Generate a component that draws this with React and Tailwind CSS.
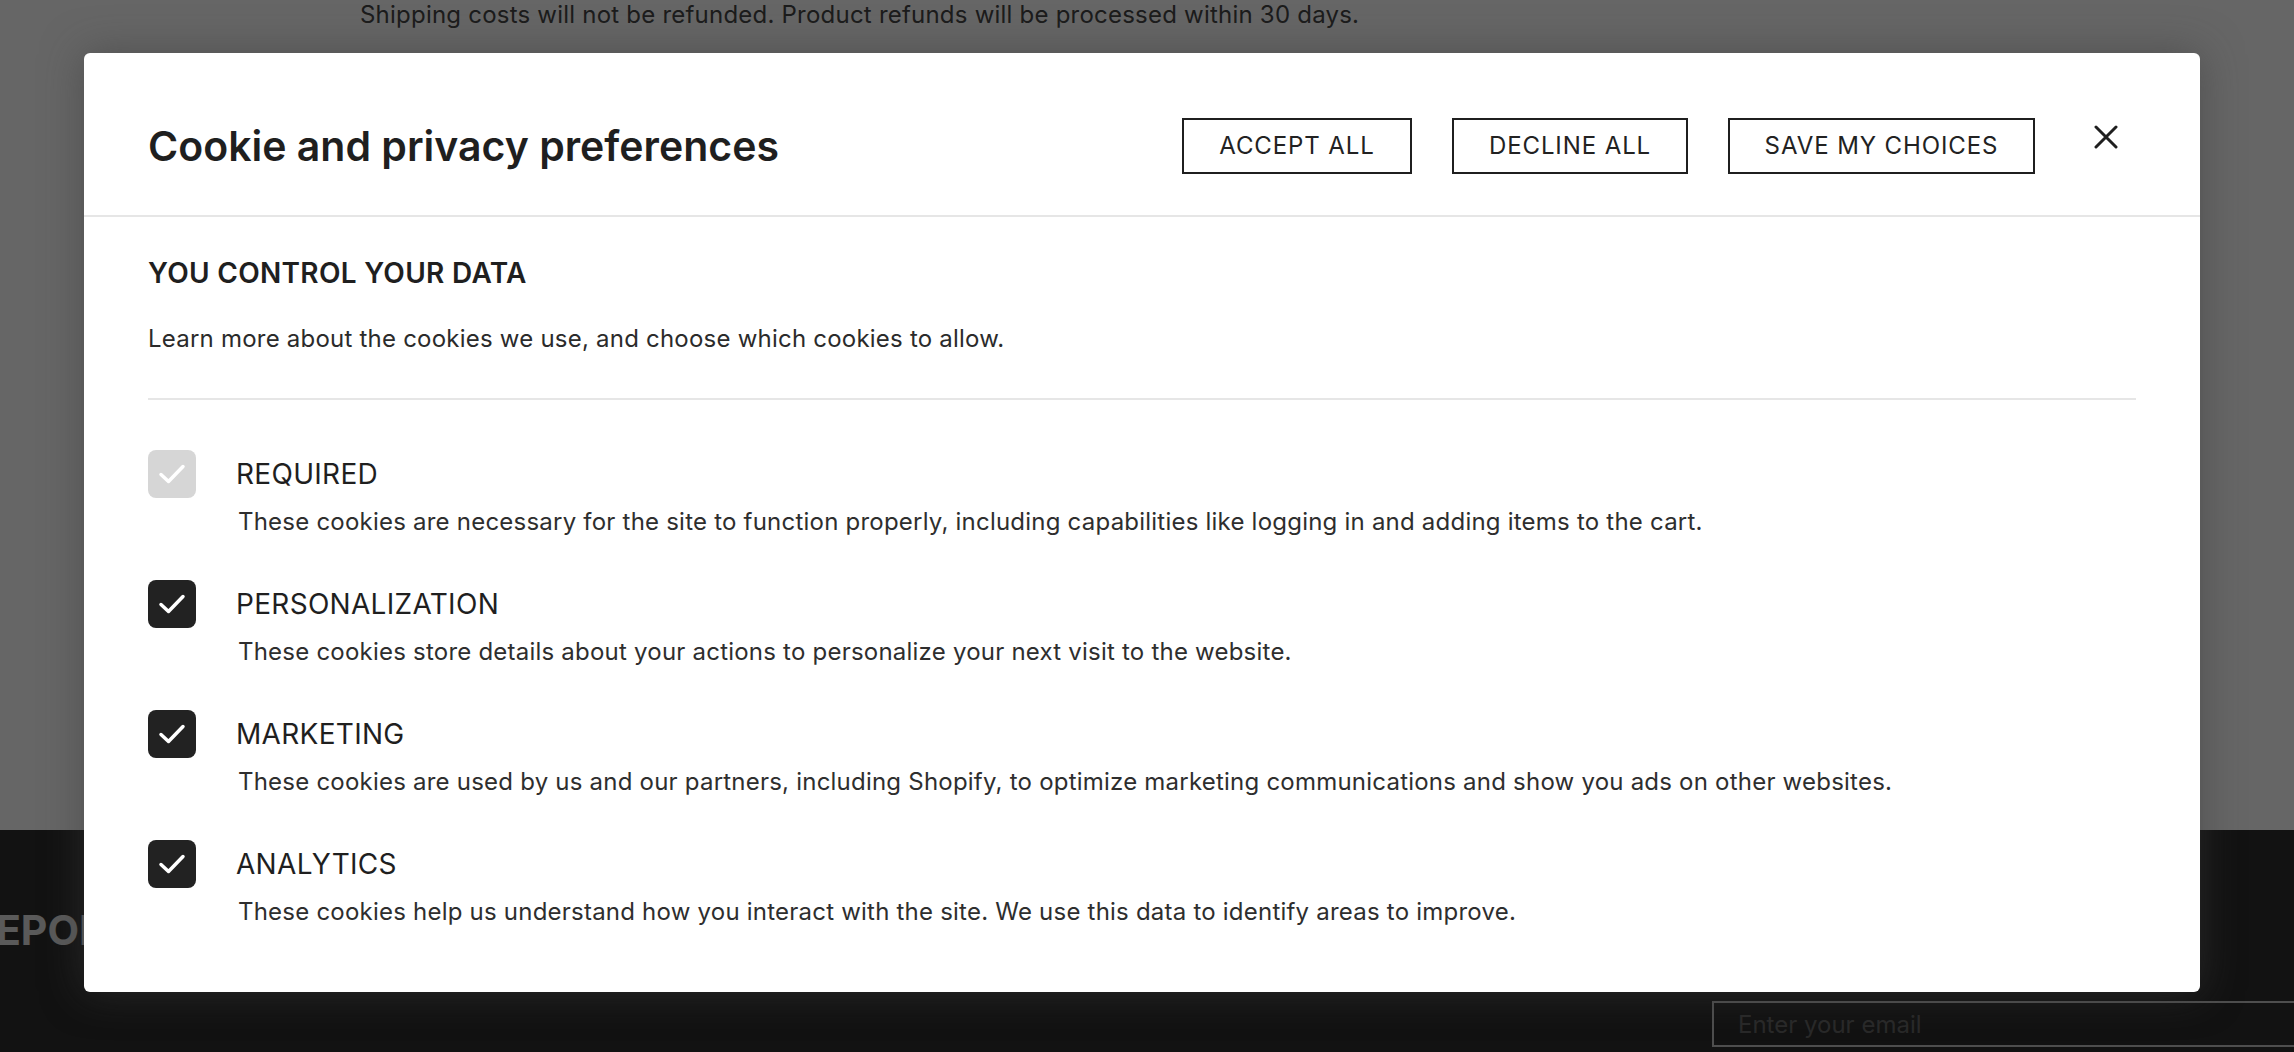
import React from 'react';

const categories = [
  {
    name: 'REQUIRED',
    locked: true,
    text: 'These cookies are necessary for the site to function properly, including capabilities like logging in and adding items to the cart.',
  },
  {
    name: 'PERSONALIZATION',
    text: 'These cookies store details about your actions to personalize your next visit to the website.',
  },
  {
    name: 'MARKETING',
    text: 'These cookies are used by us and our partners, including Shopify, to optimize marketing communications and show you ads on other websites.',
  },
  {
    name: 'ANALYTICS',
    text: 'These cookies help us understand how you interact with the site. We use this data to identify areas to improve.',
  },
];

function CheckBox({ locked }) {
  return (
    <div className={`w-[48px] h-[48px] shrink-0 rounded-[8px] flex items-center justify-center ${locked ? 'bg-[#d6d6d6]' : 'bg-[#222222]'}`}>
      <svg width="48" height="48" viewBox="0 0 48 48" fill="none">
        <polyline points="13,24.5 20.5,31.5 35,16.5" stroke="#ffffff" strokeWidth="3.5" strokeLinecap="round" strokeLinejoin="round" />
      </svg>
    </div>
  );
}

function OutlineButton({ label, width }) {
  return (
    <button className={`${width} h-[56px] border-2 border-[#1f1f1f] bg-white text-[24px] leading-none text-[#222222] tracking-[0.9px] flex items-center justify-center`}>
      {label}
    </button>
  );
}

export default function App() {
  return (
    <div className="relative w-[2294px] h-[1052px] overflow-hidden bg-white font-['Inter','Liberation_Sans',sans-serif]">
      {/* page behind the dialog */}
      <div className="h-[830px] pl-[360px]">
        <p className="text-[24px] leading-[30px] tracking-[0.22px] text-[#474747]">
          Shipping costs will not be refunded. Product refunds will be processed within 30 days.
        </p>
      </div>
      <div className="h-[222px] bg-[#2d2d2d] flex items-start">
        <h2 className="mt-[75px] -ml-[31px] text-[41px] leading-[50px] font-bold text-[#e1e1e1]">REPORTS</h2>
        <div className="ml-auto -mr-[18px] mt-[171px]">
          <input
            className="w-[600px] h-[46px] border-2 border-[#c4c4c4] bg-transparent px-[24px] text-[24px] text-[#686868] placeholder:text-[#686868] outline-none"
            placeholder="Enter your email"
          />
        </div>
      </div>

      {/* overlay */}
      <div className="absolute inset-0 bg-black/60" />

      {/* dialog */}
      <div className="absolute left-[84px] top-[53px] w-[2116px] bg-white rounded-[6px] shadow-[0_0_40px_rgba(60,60,60,0.55)]">
        <div className="flex items-center pl-[64px] pr-[82px] pt-[65px] pb-[41px] border-b-2 border-[#e6e6e6]">
          <h1 className="text-[41px] leading-[44px] font-semibold text-[#1f1f1f]">Cookie and privacy preferences</h1>
          <div className="ml-auto flex gap-[40px]">
            <OutlineButton label="ACCEPT ALL" width="w-[230px]" />
            <OutlineButton label="DECLINE ALL" width="w-[236px]" />
            <OutlineButton label="SAVE MY CHOICES" width="w-[307px]" />
          </div>
          <button className="ml-[59px] self-start mt-[7px] w-[24px] h-[24px]">
            <svg width="24" height="24" viewBox="0 0 24 24" fill="none">
              <path d="M2 2L22 22M22 2L2 22" stroke="#1f1f1f" strokeWidth="3" strokeLinecap="round" />
            </svg>
          </button>
        </div>

        <div className="px-[64px] pt-[39px] pb-[62px]">
          <h3 className="text-[28px] leading-[34px] font-semibold tracking-[0.3px] text-[#1f1f1f]">YOU CONTROL YOUR DATA</h3>
          <p className="mt-[31px] text-[24px] leading-[36px] tracking-[0.22px] text-[#2b2b2b]">
            Learn more about the cookies we use, and choose which cookies to allow.
          </p>
          <div className="mt-[41px] h-[2px] bg-[#e6e6e6]" />

          <div className="mt-[50px] flex flex-col gap-[40px]">
            {categories.map((c) => (
              <div key={c.name}>
                <div className="flex items-center gap-[40px]">
                  <CheckBox locked={c.locked} />
                  <span className="text-[28px] leading-[34px] tracking-[0.3px] text-[#1f1f1f]">{c.name}</span>
                </div>
                <p className="mt-[6px] pl-[90px] text-[24px] leading-[36px] tracking-[0.22px] text-[#2e2e2e]">{c.text}</p>
              </div>
            ))}
          </div>
        </div>
      </div>
    </div>
  );
}
